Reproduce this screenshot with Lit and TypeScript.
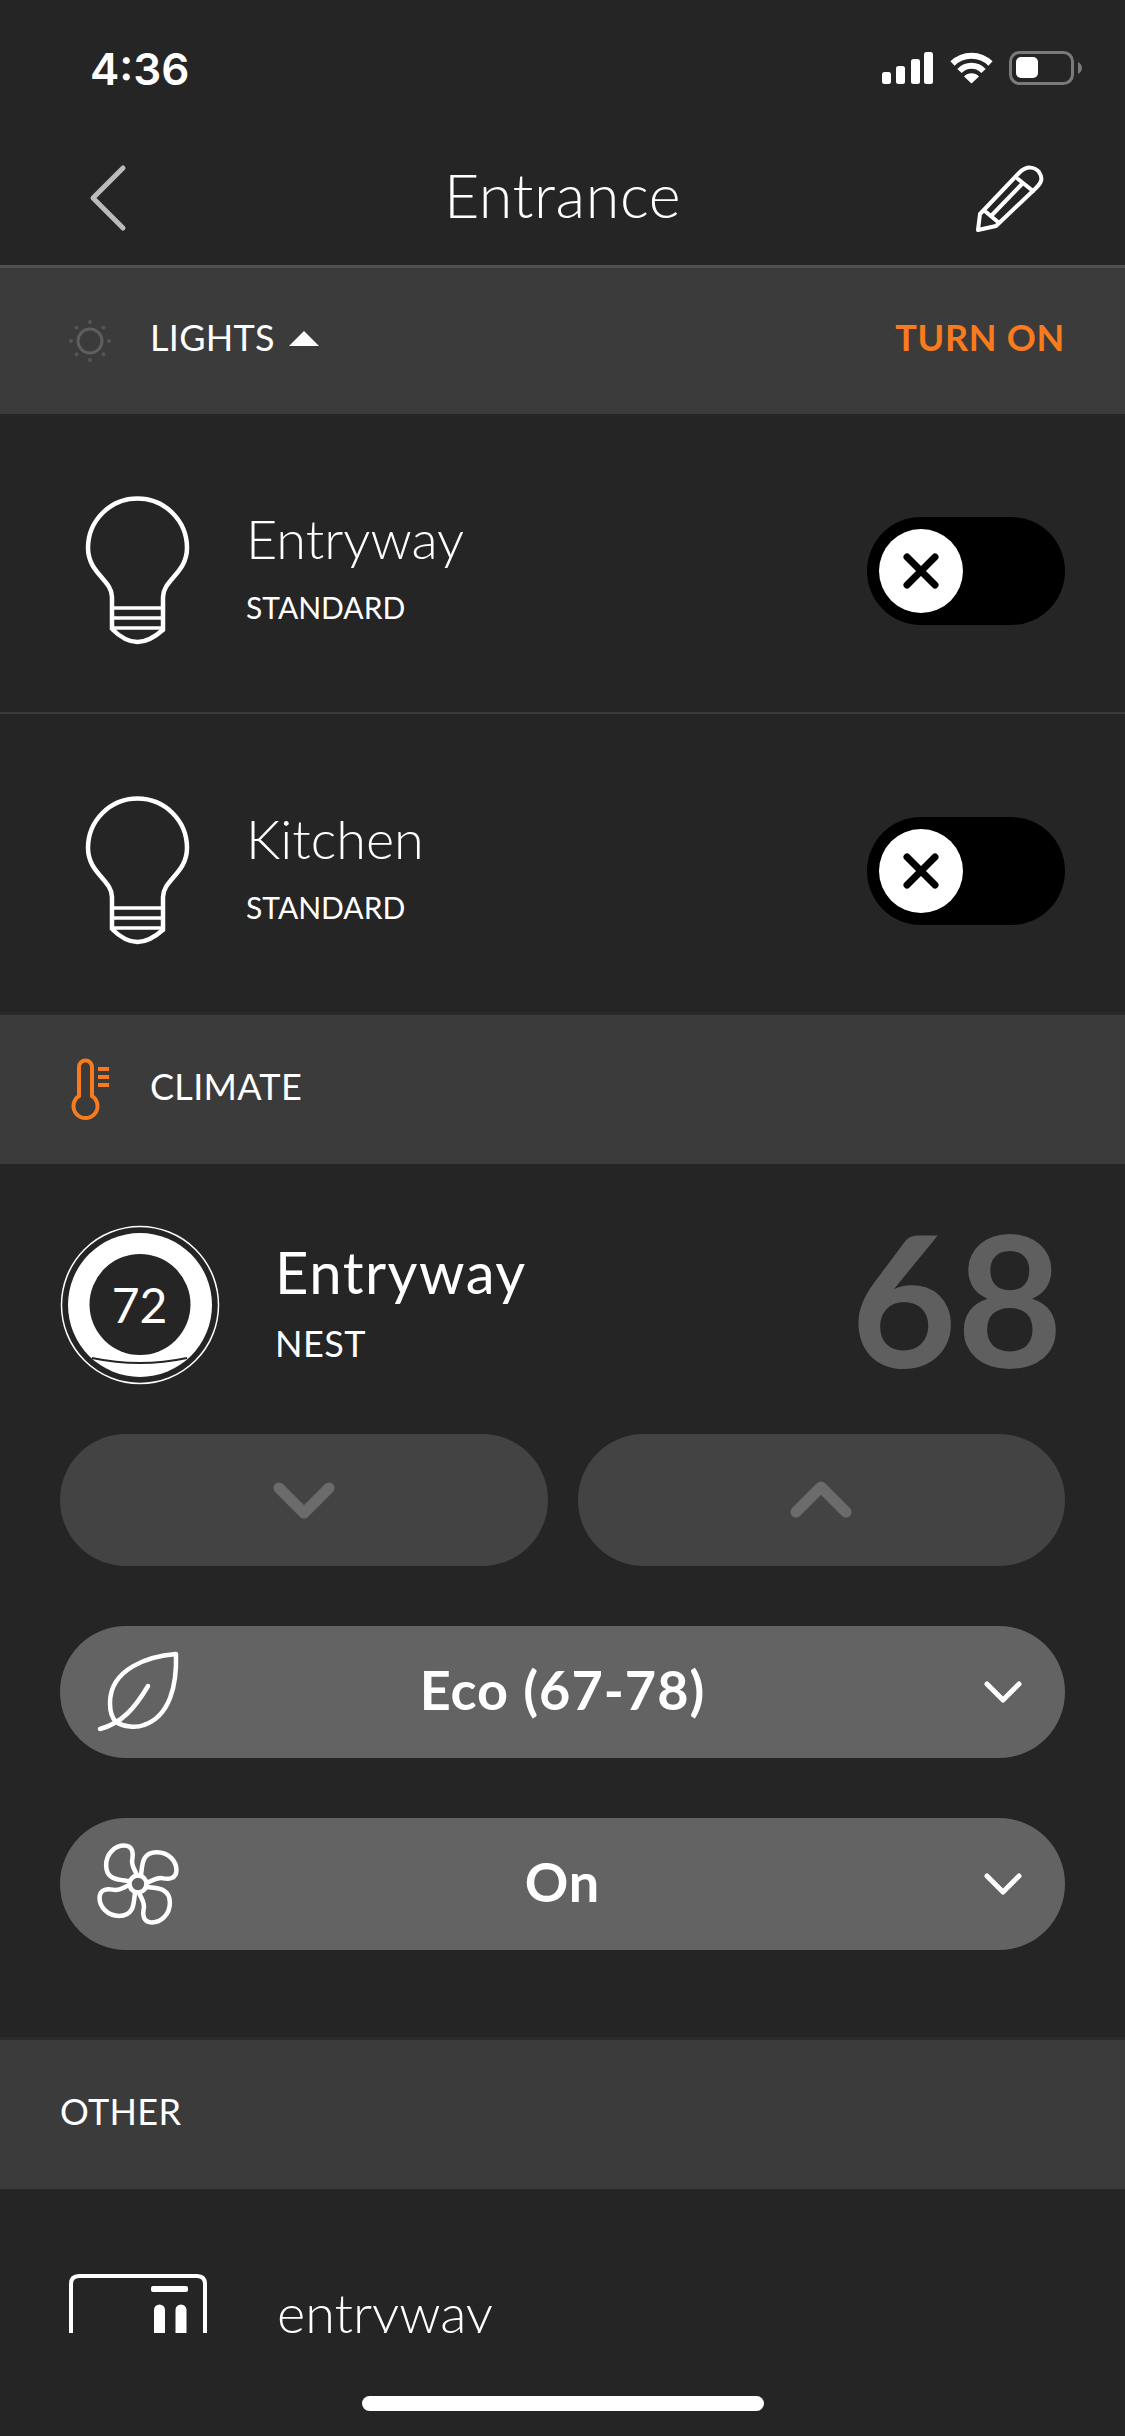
import { LitElement, html, css, svg } from 'lit';
import { customElement } from 'lit/decorators.js';

const bulb = html`<svg class="bulb" viewBox="40 18 120 166" fill="none" stroke="#fff" stroke-width="4.5">
  <path d="M72 160V127C72 110 48 103 48 78A49.5 49.5 0 1 1 147 78C147 103 123 110 123 127V160" />
  <path d="M72 138H123M72 148H123M72 158H123" stroke-width="3.5" />
  <path d="M72 159C80 167 88 172 97.500 172C107 172 115 167 124 159" />
</svg>`;

const chevron = (points: string, stroke: string, width: number) => html`<svg class="chev" width="70" height="50" viewBox="0 0 70 50" fill="none">
  <path d=${points} stroke=${stroke} stroke-width=${width} stroke-linecap="round" stroke-linejoin="round" />
</svg>`;

const petal = 'M-9 -3C-16 -5-34 -2-34 -20C-34 -33-24 -41-15 -41C-5 -41-5 -32-6 -27C-8 -20-3 -15-1 -9';

@customElement('app-root')
export class AppRoot extends LitElement {
  static styles = css`
    :host {
      display: block;
      width: 1125px;
      height: 2436px;
      overflow: hidden;
      background: #252525;
      color: #fff;
      font-family: Lato, "Open Sans", sans-serif;
    }
    svg { display: block; flex: none; overflow: visible; }

    .status {
      height: 130px;
      box-sizing: border-box;
      padding: 52px 43px 0 90px;
      display: flex;
      justify-content: space-between;
      align-items: flex-start;
    }
    .time {
      font-family: Inter, sans-serif;
      font-weight: 600;
      font-size: 44px;
      line-height: 34px;
    }
    .indicators { display: flex; gap: 15px; }
    .signal { margin-right: 1px; margin-left: -2px; }
    .battery { margin-top: -1px; }

    .nav {
      height: 135px;
      box-sizing: border-box;
      padding: 0 84px;
      display: grid;
      grid-template-columns: 1fr auto 1fr;
      align-items: center;
    }
    .back { margin-left: 4px; }
    .title { font-weight: 300; font-size: 61px; letter-spacing: 0.6px; padding-bottom: 6px; }
    .pencil { justify-self: end; margin: -2px -18px 0 0; }

    .section {
      display: flex;
      align-items: center;
      box-sizing: border-box;
      height: 152px;
      padding: 0 60px 0 65px;
      background: #3b3b3b;
      border-top: 3px solid #2a2a2a;
      font-size: 36px;
      letter-spacing: 0.3px;
    }
    .section.first { height: 149px; border-top-color: #505050; }
    .section.plain { padding-left: 60px; }
    .section-name { margin: 0 0 8px 35px; font-weight: 400; }
    .section.plain .section-name { margin-left: 0; }
    .caret { margin-left: 14px; }
    .action { margin: 0 0 8px auto; color: #f97b1e; font-weight: 700; letter-spacing: 0.7px; }

    .row {
      height: 298px;
      box-sizing: border-box;
      display: flex;
      align-items: center;
      padding: 16px 60px 0 80px;
    }
    .row.divided { height: 300px; border-bottom: 2px solid #3a3a3a; }
    .bulb { width: 120px; height: 166px; }
    .name-block { margin: 0 0 10px 46px; flex: 1; }
    .name { font-weight: 300; font-size: 54px; line-height: 64px; }
    .kind { font-size: 30px; line-height: 36px; margin-top: 18px; font-weight: 400; }

    .toggle {
      width: 198px;
      height: 108px;
      box-sizing: border-box;
      padding: 12px;
      border-radius: 54px;
      background: #000;
    }
    .knob {
      width: 84px;
      height: 84px;
      border-radius: 50%;
      background: #fff;
      display: flex;
      align-items: center;
      justify-content: center;
    }

    .climate { padding: 61px 60px 87px; }
    .device { display: flex; align-items: center; height: 160px; }
    .device-text { margin: 0 0 8px 55px; flex: 1; }
    .device-name { font-size: 58px; line-height: 68px; font-weight: 400; letter-spacing: 1.5px; }
    .device-kind { font-size: 36px; line-height: 42px; margin-top: 16px; letter-spacing: 0.5px; }
    .setpoint {
      font-size: 183px;
      line-height: 160px;
      font-weight: 700;
      color: #5f5f5f;
      margin: 0 2px 16px 0;
    }
    .steppers { display: flex; gap: 30px; margin-top: 49px; }
    .stepper {
      flex: 1;
      height: 132px;
      border-radius: 66px;
      background: #434343;
      display: flex;
      align-items: center;
      justify-content: center;
    }
    .mode {
      height: 132px;
      margin-top: 60px;
      border-radius: 66px;
      background: #636363;
      display: grid;
      grid-template-columns: 1fr auto 1fr;
      align-items: center;
      font-size: 54px;
      letter-spacing: 1px;
      font-weight: 700;
    }
    .mode-label { padding-bottom: 6px; }
    .leaf { margin-left: 35px; }
    .fan { margin-left: 33px; }
    .mode-chevron { justify-self: end; margin-right: 27px; }

    .other {
      height: 144px;
      overflow: hidden;
      display: flex;
      align-items: flex-start;
      padding: 83px 0 0 67px;
      box-sizing: border-box;
    }
    .other-name { margin: 9px 0 0 68px; font-size: 54px; font-weight: 300; line-height: 64px; }

    .home { padding-top: 63px; display: flex; justify-content: center; }
    .home-bar { width: 402px; height: 15px; border-radius: 8px; background: #fff; }
  `;

  private lights = ['Entryway', 'Kitchen'];

  private renderStatus() {
    return html`<div class="status">
      <div class="time">4:36</div>
      <div class="indicators">
        <svg class="signal" width="51" height="32" viewBox="0 0 51 32" fill="#fff">
          <rect x="0" y="20" width="9" height="12" rx="2.500" />
          <rect x="14" y="14" width="9" height="18" rx="2.500" />
          <rect x="29" y="7" width="9" height="25" rx="2.500" />
          <rect x="42" y="0" width="9" height="32" rx="2.500" />
        </svg>
        <svg width="45" height="32" viewBox="0 0 45 32" fill="none" stroke="#fff">
          <path d="M3.500 11.500A27 27 0 0 1 41.500 11.500" stroke-width="6" />
          <path d="M10.500 19A16.500 16.500 0 0 1 34.500 19" stroke-width="6" />
          <path d="M22.500 31.500L15 24.500A10.500 10.500 0 0 1 30 24.500Z" fill="#fff" stroke="none" />
        </svg>
        <svg class="battery" width="73" height="34" viewBox="0 0 73 34">
          <rect x="1.500" y="1.500" width="62" height="31" rx="9" fill="none" stroke="#7a7a7a" stroke-width="3" />
          <rect x="7" y="6" width="22" height="21" rx="5" fill="#fff" />
          <path d="M69 11C71 12 73 14 73 17C73 20 71 22 69 23Z" fill="#7a7a7a" />
        </svg>
      </div>
    </div>`;
  }

  private renderNav() {
    return html`<div class="nav">
      <svg class="back" width="40" height="68" viewBox="0 0 40 68" fill="none">
        <path d="M35 4L5 34L35 64" stroke="#bbb" stroke-width="5" stroke-linecap="round" stroke-linejoin="round" />
      </svg>
      <div class="title">Entrance</div>
      <svg class="pencil" width="100" height="90" viewBox="0 0 100 90" fill="none" stroke="#fff" stroke-width="4" stroke-linejoin="round" stroke-linecap="round">
        <path d="M21 62L60 21C68 13 76 15 80 20C84 26 83 30 77 36L37 74L19 78Z" />
        <path d="M59 27L74 39M63 32L33 63M27 60L39 70" />
      </svg>
    </div>`;
  }

  private renderLight(name: string, divided: boolean) {
    return html`<div class="row ${divided ? 'divided' : ''}">
      ${bulb}
      <div class="name-block">
        <div class="name">${name}</div>
        <div class="kind">STANDARD</div>
      </div>
      <div class="toggle">
        <div class="knob">
          <svg width="36" height="36" viewBox="0 0 36 36">
            <path d="M4 4L32 32M32 4L4 32" stroke="#000" stroke-width="7" stroke-linecap="round" />
          </svg>
        </div>
      </div>
    </div>`;
  }

  private renderThermostat() {
    return html`<svg width="160" height="160" viewBox="0 0 160 160">
      <circle cx="80" cy="80" r="78.500" fill="none" stroke="#fff" stroke-width="1.500" />
      <circle cx="80" cy="80" r="72" fill="#fff" />
      <circle cx="80" cy="79.500" r="50.500" fill="#252525" />
      <path d="M32 133Q80 143 127 133" fill="none" stroke="#252525" stroke-width="2" />
      <text x="79.500" y="98" text-anchor="middle" fill="#fff" font-family="Lato, sans-serif" font-size="48">72</text>
    </svg>`;
  }

  render() {
    return html`
      ${this.renderStatus()}
      ${this.renderNav()}

      <div class="section first">
        <svg width="50" height="50" viewBox="-25 -25 50 50">
          <circle r="12" fill="none" stroke="#5e5e5e" stroke-width="3" />
          ${[0, 45, 90, 135, 180, 225, 270, 315].map(
            (a) => svg`<circle cx="0" cy="-19" r="2" fill="#555" transform="rotate(${a})" />`
          )}
        </svg>
        <span class="section-name">LIGHTS</span>
        <svg class="caret" width="30" height="15" viewBox="0 0 30 15" style="margin-bottom:6px"><path d="M15 0L30 15H0Z" fill="#fff" /></svg>
        <span class="action">TURN ON</span>
      </div>
      ${this.lights.map((l, i) => this.renderLight(l, i === 0))}

      <div class="section">
        <svg width="50" height="70" viewBox="25 25 50 70" fill="none" stroke="#f97b1e" stroke-width="4">
          <path d="M39 66V37A6.500 6.500 0 0 1 52 37V66A12 12 0 1 1 39 66Z" />
          <path d="M58 39H69M58 47H69M58 55H69" />
        </svg>
        <span class="section-name">CLIMATE</span>
      </div>

      <div class="climate">
        <div class="device">
          ${this.renderThermostat()}
          <div class="device-text">
            <div class="device-name">Entryway</div>
            <div class="device-kind">NEST</div>
          </div>
          <div class="setpoint">68</div>
        </div>
        <div class="steppers">
          <div class="stepper">${chevron('M10 13L35 38L60 13', '#6b6b6b', 11)}</div>
          <div class="stepper">${chevron('M10 37L35 12L60 37', '#6b6b6b', 11)}</div>
        </div>
        <div class="mode">
          <svg class="leaf" width="85" height="85" viewBox="55 50 85 85" fill="none" stroke="#fff" stroke-width="4.500" stroke-linecap="round" stroke-linejoin="round">
            <path d="M136 54C110 56 70 68 70 103C70 112 72 118 76 122C84 127 96 128 104 125C130 116 137 85 136 54Z" />
            <path d="M60 129C82 123 95 108 108 86" />
          </svg>
          <span class="mode-label">Eco (67-78)</span>
          <span class="mode-chevron">${chevron('M19 17L35 33L51 17', '#fff', 5)}</span>
        </div>
        <div class="mode">
          <svg class="fan" width="90" height="90" viewBox="-48 -48 96 96" fill="none" stroke="#fff" stroke-width="4.800" stroke-linecap="round" stroke-linejoin="round">
            <circle r="9" />
            ${[0, 90, 180, 270].map((a) => svg`<path d=${petal} transform="rotate(${a})" />`)}
          </svg>
          <span class="mode-label">On</span>
          <span class="mode-chevron">${chevron('M19 17L35 33L51 17', '#fff', 5)}</span>
        </div>
      </div>

      <div class="section plain"><span class="section-name">OTHER</span></div>
      <div class="other">
        <svg width="142" height="100" viewBox="0 0 142 100" fill="none" stroke="#fff" stroke-width="4">
          <path d="M4 100V12Q4 4 12 4H130Q138 4 138 12V100" />
          <rect x="84" y="14" width="37" height="6" rx="2" fill="#fff" stroke="none" />
          <path d="M92.500 100V38M114 100V38" stroke-width="11" stroke-linecap="round" />
        </svg>
        <span class="other-name">entryway</span>
      </div>
      <div class="home"><div class="home-bar"></div></div>
    `;
  }
}
